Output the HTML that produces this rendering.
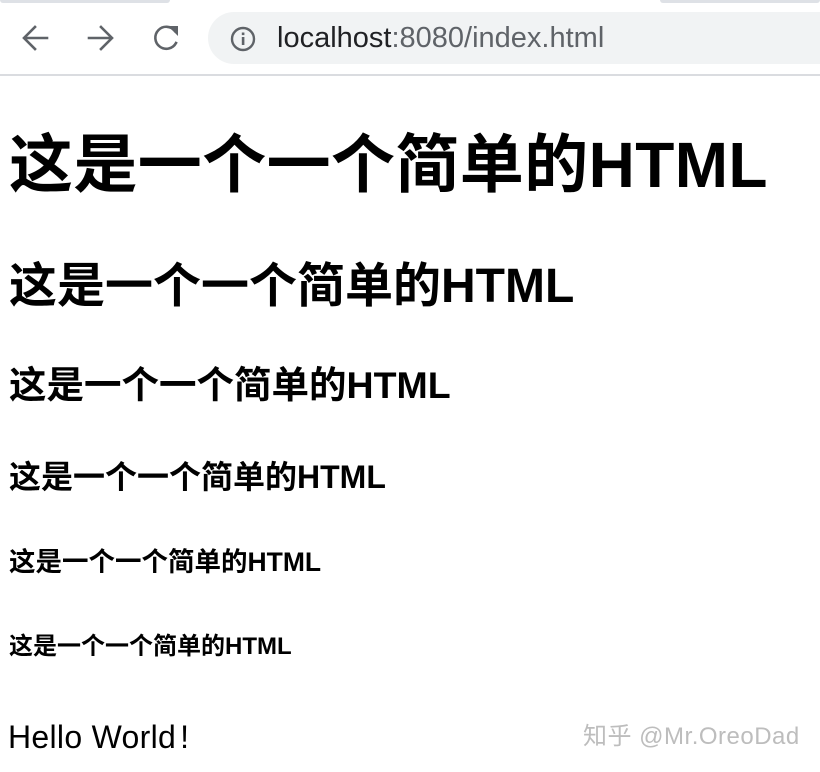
<!DOCTYPE html>
<html><head><meta charset="utf-8"><style>
html,body{margin:0;padding:0;width:820px;height:772px;overflow:hidden;background:#fff;position:relative}
.h{position:absolute;left:9px;margin:0;font-family:"Liberation Sans","Noto Sans CJK SC",sans-serif;font-weight:bold;color:#000;white-space:nowrap}
.bar{position:absolute;left:0;top:0;width:820px;height:74px;background:#fff;border-bottom:2px solid #dadce0}
.url{position:absolute;left:208px;top:12px;width:640px;height:52px;background:#f1f3f4;border-radius:26px}
.tabs{position:absolute;top:0;height:3px;background:#dee1e6}
</style></head><body>
<div class="bar">
<div class="tabs" style="left:0;width:170px;border-radius:0 0 6px 6px"></div>
<div class="tabs" style="left:660px;width:160px;border-radius:0 0 6px 6px"></div>
<svg style="position:absolute;left:0;top:0" width="200" height="74">
<g fill="none" stroke="#5f6368" stroke-width="2.6" stroke-linecap="square">
<path d="M47 38H25M35 27L24 38L35 49"/>
<path d="M89 38H111M101 27L112 38L101 49"/>
<path d="M175 31A11 11 0 1 0 176 43"/>
</g>
<path d="M168 26L178 26L178 36Z" fill="#5f6368"/>
</svg>
<div class="url">
<svg style="position:absolute;left:22px;top:14px" width="26" height="26"><circle cx="13" cy="13" r="11" fill="none" stroke="#5f6368" stroke-width="2.4"/><rect x="11.8" y="11" width="2.6" height="8" fill="#5f6368"/><rect x="11.8" y="6.5" width="2.6" height="2.6" fill="#5f6368"/></svg>
<div style="position:absolute;left:69px;top:9px;font:29px/34px 'Liberation Sans',sans-serif;color:#5f6368;white-space:nowrap"><span style="color:#202124">localhost</span>:8080/index.html</div>
</div>
</div>
<div class="h" style="font-size:64px;top:133px;line-height:64px;letter-spacing:0.4px">这是一个一个简单的HTML</div>
<div class="h" style="font-size:48px;top:263px;line-height:48px">这是一个一个简单的HTML</div>
<div class="h" style="font-size:37.5px;top:367px;line-height:37px">这是一个一个简单的HTML</div>
<div class="h" style="font-size:32px;top:461px;line-height:32px">这是一个一个简单的HTML</div>
<div class="h" style="font-size:26.5px;top:549px;line-height:26px">这是一个一个简单的HTML</div>
<div class="h" style="font-size:24px;top:635px;line-height:24px">这是一个一个简单的HTML</div>
<div style="position:absolute;left:8px;top:719px;font:32px/36px 'Liberation Sans',sans-serif;color:#000;letter-spacing:0.3px">Hello World<span style="margin-left:4px">!</span></div>
<div style="position:absolute;left:583px;top:723px;font:24px/28px 'Liberation Sans','Noto Sans CJK SC',sans-serif;color:#bdbdbd;white-space:nowrap;letter-spacing:0.5px">知乎 @Mr.OreoDad</div>
</body></html>
